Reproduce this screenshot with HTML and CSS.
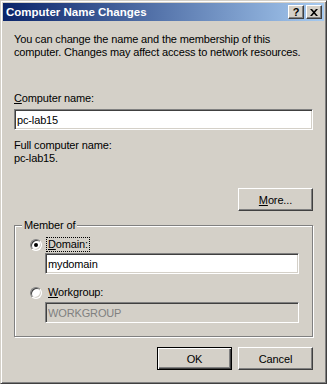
FILE: index.html
```html
<!DOCTYPE html>
<html lang="en">
<head>
  <meta charset="UTF-8">
  <title>Computer Name Changes</title>
  <link rel="stylesheet" href="styles.css">
</head>
<body>

  <div class="window">
    <div class="titlebar">
      <span class="title">Computer Name Changes</span>
      <div class="caption-btns">
        <span class="cap-btn help">?</span>
        <span class="cap-btn close">
          <svg width="8" height="7" viewBox="0 0 8 7"><path d="M0 0h2l2 2.2L6 0h2L5 3.5 8 7H6L4 4.8 2 7H0l3-3.5z" fill="#000"/></svg>
        </span>
      </div>
    </div>

    <div class="content">
      <p class="intro">You can change the name and the membership of this<br>computer. Changes may affect access to network resources.</p>

      <label class="field-label"><u>C</u>omputer name:</label>
      <input class="edit" type="text" value="pc-lab15">

      <div class="full-label">Full computer name:</div>
      <div class="full-name">pc-lab15.</div>

      <div class="more-row">
        <button class="btn"><u>M</u>ore...</button>
      </div>

      <fieldset class="group">
        <legend>Member of</legend>
        <div class="radio-row">
          <span class="radio checked"></span>
          <span class="radio-label focus"><u>D</u>omain:</span>
        </div>
        <input class="edit indent" type="text" value="mydomain">

        <div class="radio-row second">
          <span class="radio"></span>
          <span class="radio-label"><u>W</u>orkgroup:</span>
        </div>
        <input class="edit indent" type="text" value="WORKGROUP" disabled>
      </fieldset>

      <div class="buttons">
        <button class="btn default">OK</button>
        <button class="btn">Cancel</button>
      </div>
    </div>
  </div>

</body>
</html>
```

FILE: styles.css
```css
* {
  box-sizing: border-box;
}

body {
  margin: 0;
  background: #d4d0c8;
  font-family: "Liberation Sans", Arial, sans-serif;
  font-size: 11px;
  letter-spacing: -0.14px;
  color: #000;
}

.window {
  width: 327px;
  height: 384px;
  background: #d4d0c8;
  border: 1px solid;
  border-color: #d4d0c8 #404040 #404040 #d4d0c8;
  box-shadow: inset 1px 1px #fff, inset -1px -1px #808080;
  padding: 2px;
}

.titlebar {
  height: 18px;
  background: linear-gradient(to right, #0a246a, #a6caf0);
  display: flex;
  align-items: center;
  justify-content: space-between;
  padding: 0 2px 0 3px;
  color: #fff;
  font-weight: bold;
  line-height: 18px;
}

.title {
  font-size: 11.5px;
  letter-spacing: 0;
}

.caption-btns {
  display: flex;
  gap: 2px;
}

.cap-btn {
  width: 16px;
  height: 14px;
  background: #d4d0c8;
  border: 1px solid;
  border-color: #fff #404040 #404040 #fff;
  box-shadow: inset -1px -1px #808080;
  display: flex;
  align-items: center;
  justify-content: center;
  color: #000;
  font-size: 11px;
  line-height: 12px;
}

.content {
  padding: 12px 11px 0;
}

.intro {
  margin: 0;
  line-height: 13px;
}

.field-label {
  display: block;
  margin-top: 33px;
  line-height: 13px;
}

.edit {
  display: block;
  width: 100%;
  height: 21px;
  margin: 4px 0 0;
  padding: 0 2px;
  border: 1px solid;
  border-color: #808080 #fff #fff #808080;
  box-shadow: inset 1px 1px #404040, inset -1px -1px #d4d0c8;
  background: #fff;
  color: #000;
  font: inherit;
  letter-spacing: inherit;
  outline: none;
}

.edit.indent {
  width: calc(100% - 15px);
  margin-left: 15px;
  margin-top: 1px;
}

.edit:disabled {
  background: #d4d0c8;
  color: #808080;
  -webkit-text-fill-color: #808080;
}

.full-label {
  margin-top: 9px;
  line-height: 13px;
}

.full-name {
  line-height: 13px;
}

.more-row {
  display: flex;
  justify-content: flex-end;
  margin-top: 23px;
}

.btn {
  width: 75px;
  height: 23px;
  padding: 0;
  background: #d4d0c8;
  border: 1px solid;
  border-color: #fff #404040 #404040 #fff;
  box-shadow: inset -1px -1px #808080;
  font: inherit;
  letter-spacing: inherit;
  color: #000;
}

.btn.default {
  border-color: #000;
  box-shadow: inset 1px 1px #fff, inset -1px -1px #404040, inset -2px -2px #808080;
}

.group {
  width: 299px;
  margin: 8px 0 0;
  padding: 5px 13px 13px 15px;
  border: 1px solid #808080;
  box-shadow: inset 1px 1px #fff, 1px 1px #fff;
  min-width: 0;
}

.group legend {
  margin-left: -8px;
  padding: 0 2px;
  line-height: 13px;
  background: #d4d0c8;
}

.radio-row {
  display: flex;
  align-items: center;
  height: 15px;
}

.radio-row.second {
  margin-top: 11px;
  margin-bottom: 2px;
}

.radio {
  width: 12px;
  height: 12px;
  border-radius: 50%;
  background: #fff;
  border: 1px solid;
  border-color: #808080 #fff #fff #808080;
  box-shadow: inset 1px 1px #404040, inset -1px -1px #d4d0c8;
  display: flex;
  align-items: center;
  justify-content: center;
}

.radio.checked::after {
  content: "";
  width: 4px;
  height: 4px;
  border-radius: 50%;
  background: #000;
}

.radio-label {
  margin-left: 4px;
  padding: 0 1px;
  line-height: 13px;
  border: 1px solid transparent;
}

.radio-label.focus {
  border: 1px dotted #000;
}

.buttons {
  display: flex;
  justify-content: flex-end;
  gap: 6px;
  margin-top: 10px;
}
```
